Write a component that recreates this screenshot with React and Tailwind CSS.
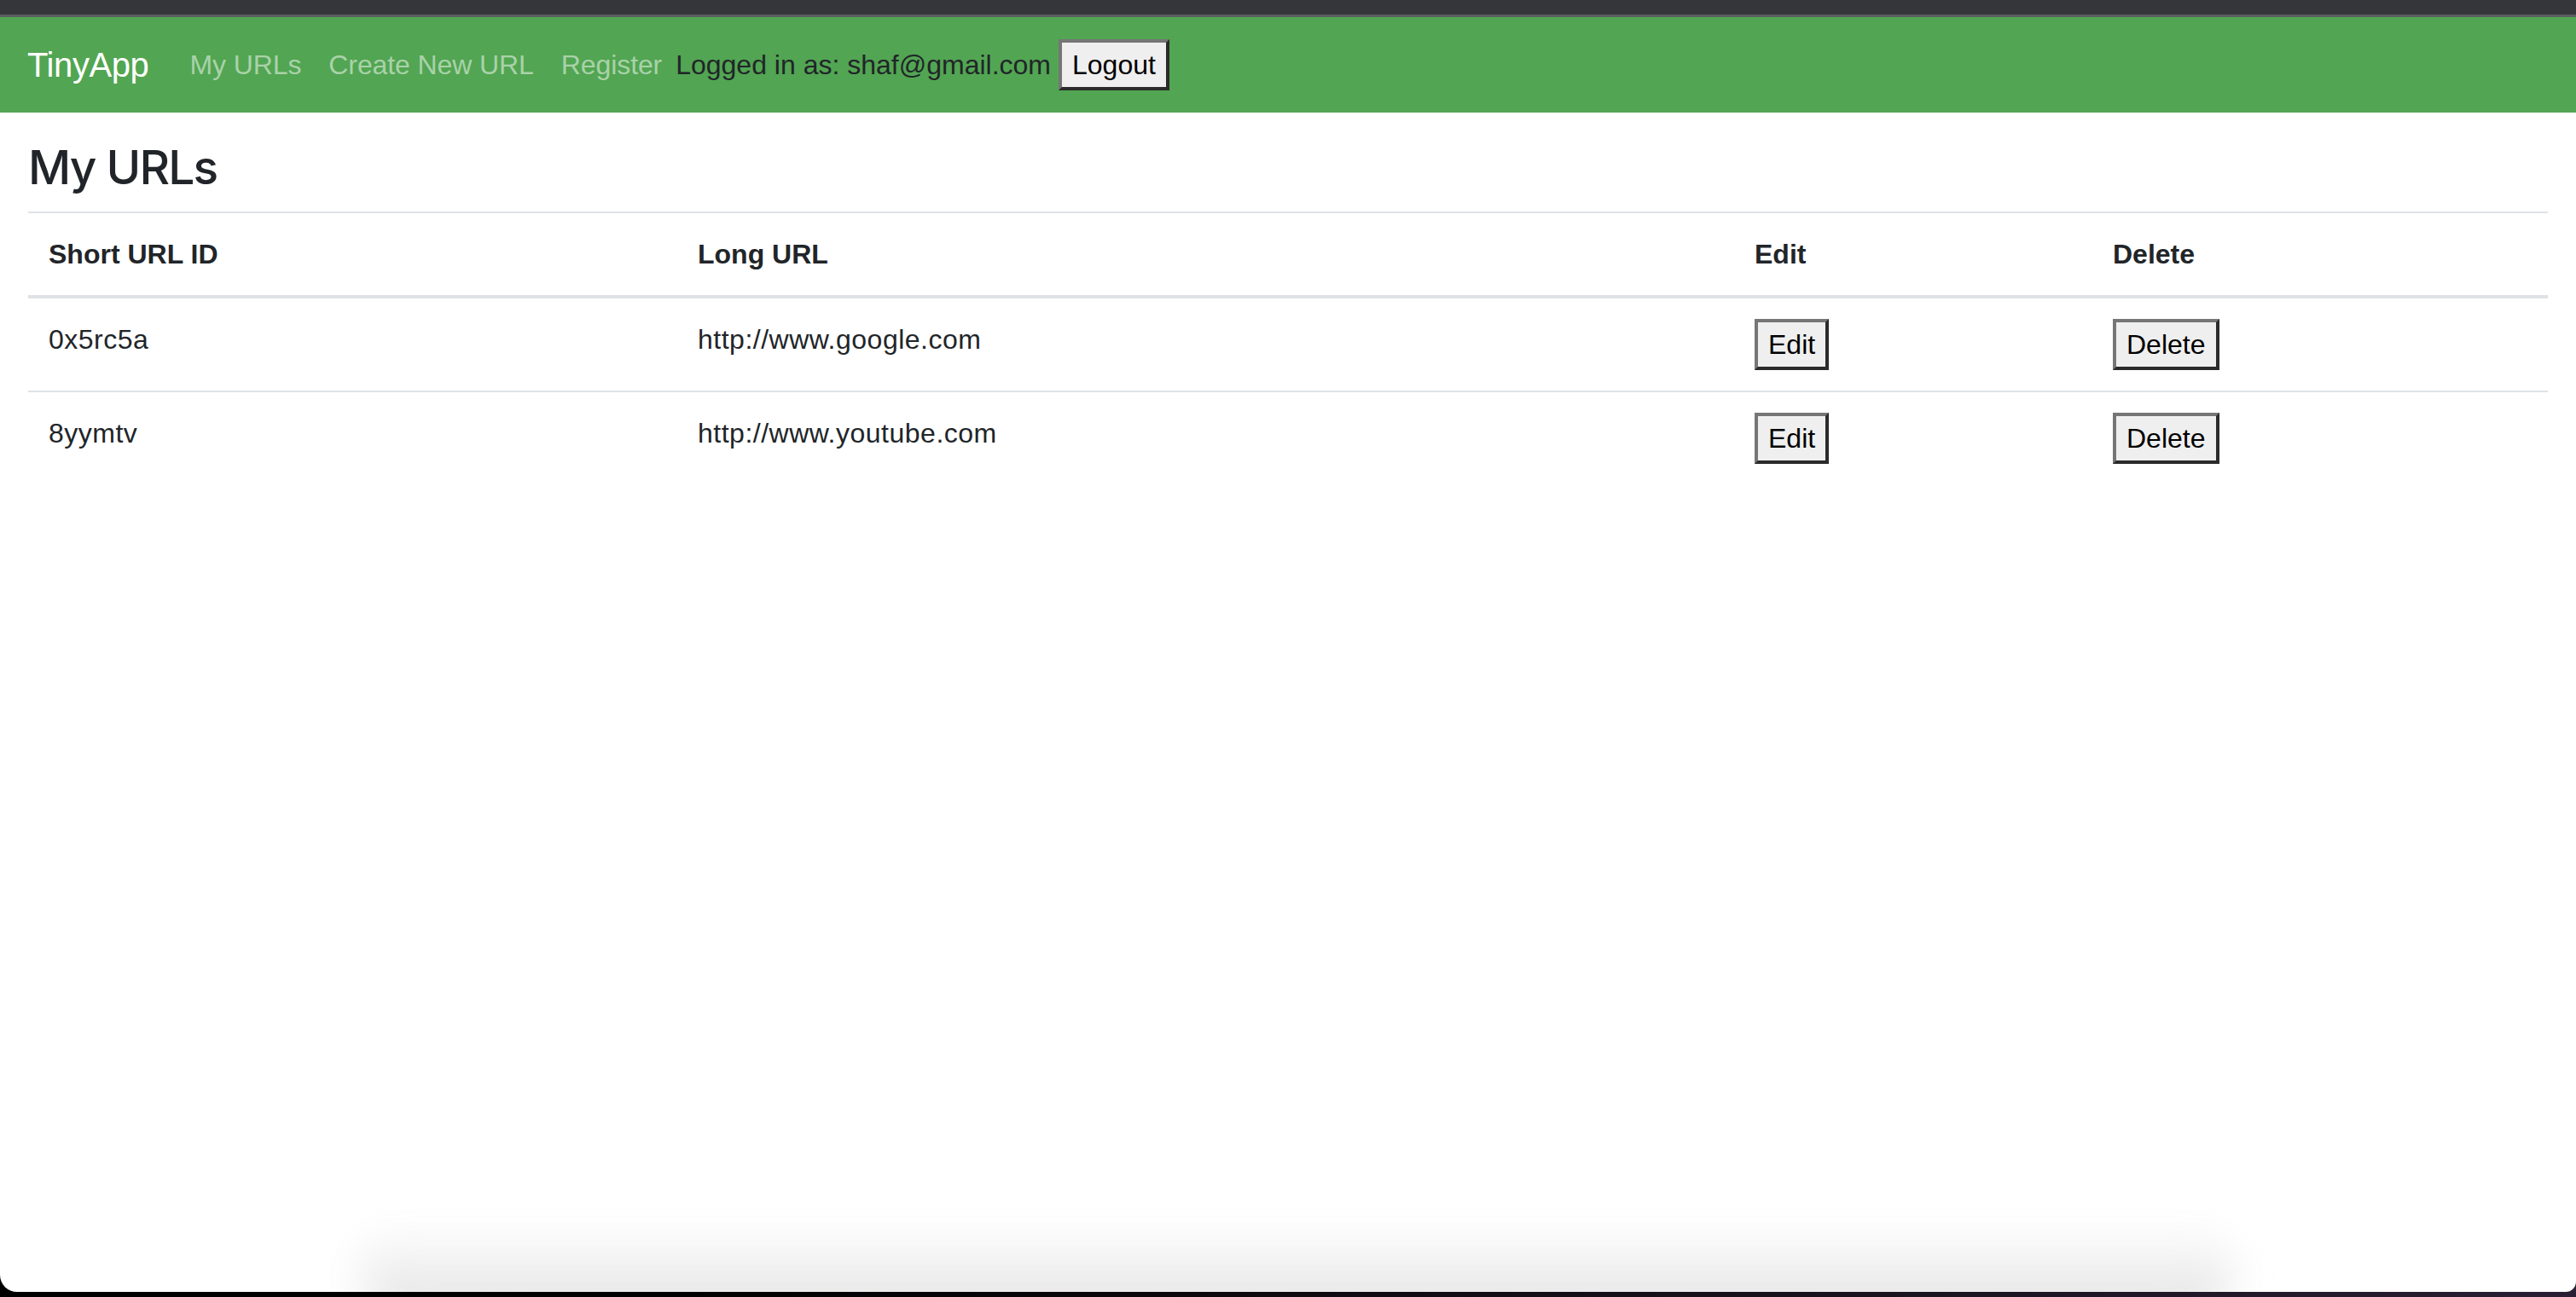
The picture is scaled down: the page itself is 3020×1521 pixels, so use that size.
const urls = [
  { id: '0x5rc5a', longURL: 'http://www.google.com' },
  { id: '8yymtv', longURL: 'http://www.youtube.com' },
];

function OldButton({ children }) {
  return (
    <button className="bg-[#efefef] text-black px-[12px] py-[2px] border-[4px] border-t-[#767676] border-l-[#767676] border-b-[#2b2b2b] border-r-[#2b2b2b] leading-[48px] text-[32px] tracking-normal align-middle">
      {children}
    </button>
  );
}

export default function App() {
  return (
    <div
      className="h-[1521px] w-[3020px] flex flex-col bg-gradient-to-r from-black via-[#0d0a10] to-[#2a1f33] overflow-hidden"
      style={{ fontFamily: '"Liberation Sans", Arial, sans-serif' }}
    >
      <div className="h-[17px] bg-[#35363a] shrink-0" />
      <div className="h-[3px] bg-[#5c5c5e] shrink-0" />

      <div className="flex-1 flex flex-col bg-white rounded-bl-[20px] rounded-br-[12px] relative overflow-hidden">
        <nav className="h-[112px] shrink-0 bg-[#52a552] flex items-center px-[32px] text-[32px]">
          <a className="text-white text-[40px] mr-[32px] leading-[60px] tracking-[-0.4px]">TinyApp</a>
          <a className="text-[#a9d2a9] px-[16px] leading-[48px] tracking-[-0.1px]">My URLs</a>
          <a className="text-[#a9d2a9] px-[16px] leading-[48px] tracking-[-0.1px]">Create New URL</a>
          <a className="text-[#a9d2a9] px-[16px] leading-[48px] tracking-[-0.1px]">Register</a>
          <span className="text-[#212529] leading-[48px]">Logged in as: shaf@gmail.com</span>
          <span className="ml-[9px]">
            <OldButton>Logout</OldButton>
          </span>
        </nav>

        <div className="px-[33px] text-[#212529]">
          <h3
            className="text-[55px] leading-[67px] mt-[31px] mb-[18px] font-medium tracking-[-1.8px]"
            style={{ fontFamily: 'Inter, "Liberation Sans", sans-serif' }}
          >
            My URLs
          </h3>
          <table className="w-full text-[32px] leading-[48px] border-collapse">
            <thead>
              <tr>
                <th className="w-[761px] text-left font-bold p-[24px] border-t-[2px] border-b-[4px] border-[#dee2e6]">Short URL ID</th>
                <th className="w-[1239px] text-left font-bold p-[24px] border-t-[2px] border-b-[4px] border-[#dee2e6]">Long URL</th>
                <th className="w-[420px] text-left font-bold p-[24px] border-t-[2px] border-b-[4px] border-[#dee2e6]">Edit</th>
                <th className="text-left font-bold p-[24px] border-t-[2px] border-b-[4px] border-[#dee2e6]">Delete</th>
              </tr>
            </thead>
            <tbody>
              {urls.map((u, i) => (
                <tr key={u.id} className={i > 0 ? 'border-t-[2px] border-[#dee2e6]' : ''}>
                  <td className="p-[24px] align-top tracking-[0.5px]">{u.id}</td>
                  <td className="p-[24px] align-top tracking-[0.5px]">{u.longURL}</td>
                  <td className="p-[24px] align-top">
                    <OldButton>Edit</OldButton>
                  </td>
                  <td className="p-[24px] align-top">
                    <OldButton>Delete</OldButton>
                  </td>
                </tr>
              ))}
            </tbody>
          </table>
        </div>

        {/* shadow cast from the dock at the bottom of the screenshot */}
        <div className="absolute left-[420px] right-[400px] bottom-[-30px] h-[110px] rounded-[60px] bg-gradient-to-b from-transparent to-[#d8d8d8] blur-[24px] opacity-80 pointer-events-none" />
      </div>
      <div className="h-[6px] shrink-0" />
    </div>
  );
}
